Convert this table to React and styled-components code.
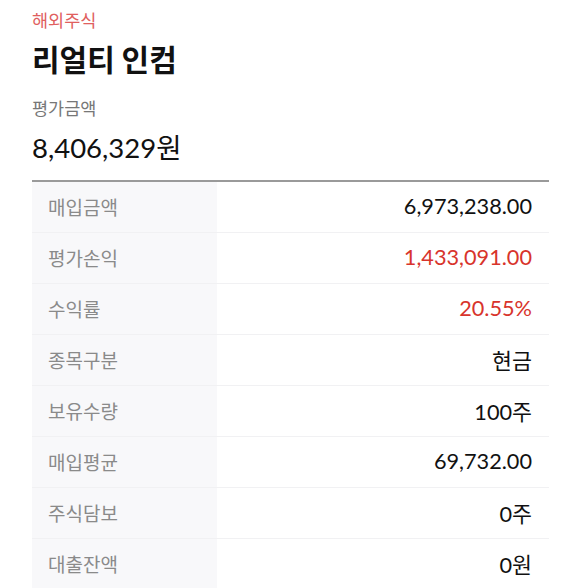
import React from "react";
import styled, { createGlobalStyle } from "styled-components";

const Global = createGlobalStyle`
  html, body { margin: 0; padding: 0; background: #fff; }
  body { font-family: Lato, "Noto Sans CJK KR", sans-serif; }
`;

const Page = styled.div`
  padding: 8px 31px 0 32px;
`;

const Category = styled.div`
  font-family: "Noto Sans CJK KR", sans-serif;
  font-size: 17.5px;
  line-height: 24px;
  color: #e0605e;
`;

const Title = styled.h1`
  margin: 6px 0 0;
  font-family: "Noto Sans CJK KR", sans-serif;
  font-size: 30px;
  line-height: 40px;
  font-weight: 700;
  color: #111;
`;

const Caption = styled.div`
  margin-top: 18px;
  font-family: "Noto Sans CJK KR", sans-serif;
  font-size: 17.5px;
  line-height: 24px;
  color: #777;
`;

const Amount = styled.div`
  margin-top: 10px;
  font-family: Lato, "Noto Sans CJK KR", sans-serif;
  font-size: 27.5px;
  line-height: 36px;
  color: #111;
`;

const Table = styled.div`
  margin-top: 14px;
  border-top: 2px solid #9a9a9a;
`;

const Row = styled.div`
  display: grid;
  grid-template-columns: 185px 1fr;
  height: 50px;
  border-bottom: 1px solid #f1f1f3;
`;

const Label = styled.div`
  display: flex;
  align-items: center;
  padding: 0 0 2px 16px;
  background: #f8f8fa;
  font-family: "Noto Sans CJK KR", sans-serif;
  font-size: 19px;
  color: #8a8a8a;
`;

const Value = styled.div`
  display: flex;
  align-items: center;
  justify-content: flex-end;
  padding: 0 17px 2px 0;
  font-family: Lato, "Noto Sans CJK KR", sans-serif;
  font-size: 21.7px;
  color: ${(p) => (p.$red ? "#d8342c" : "#111")};
`;

const rows = [
  ["매입금액", "6,973,238.00"],
  ["평가손익", "1,433,091.00", true],
  ["수익률", "20.55%", true],
  ["종목구분", "현금"],
  ["보유수량", "100주"],
  ["매입평균", "69,732.00"],
  ["주식담보", "0주"],
  ["대출잔액", "0원"],
];

export default function App() {
  return (
    <>
      <Global />
      <Page>
        <Category>해외주식</Category>
        <Title>리얼티 인컴</Title>
        <Caption>평가금액</Caption>
        <Amount>8,406,329원</Amount>
        <Table>
          {rows.map(([l, v, red]) => (
            <Row key={l}>
              <Label>{l}</Label>
              <Value $red={red}>{v}</Value>
            </Row>
          ))}
        </Table>
      </Page>
    </>
  );
}
